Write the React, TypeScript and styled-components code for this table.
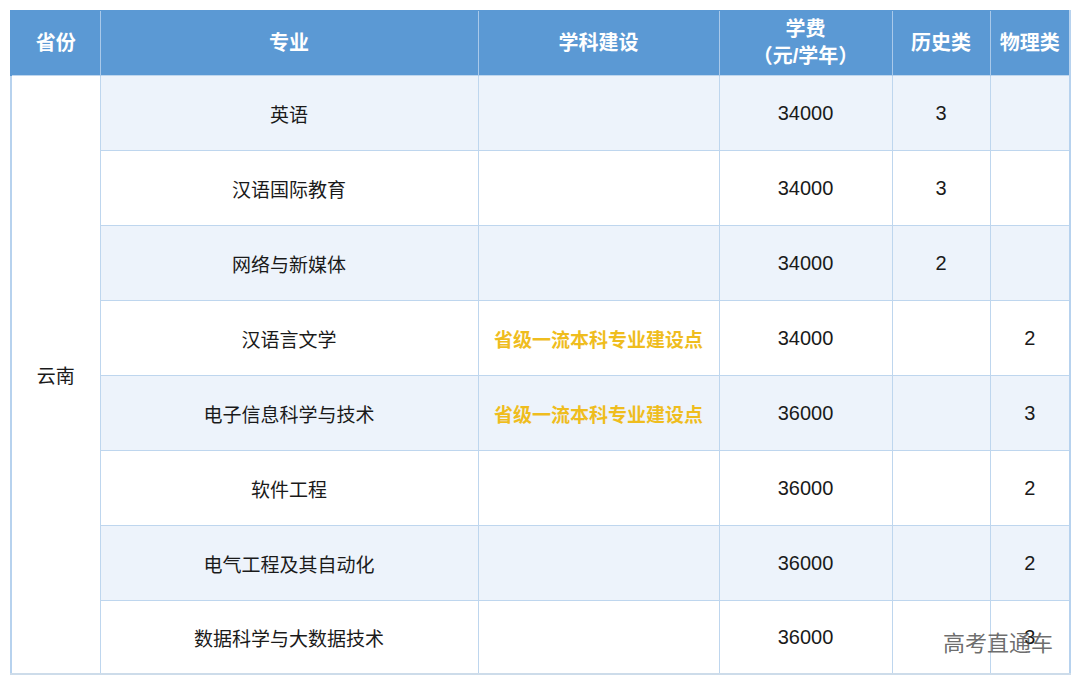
import React from "react";
import styled, { createGlobalStyle } from "styled-components";

const GlobalStyle = createGlobalStyle`
  body {
    margin: 0;
    background: #ffffff;
    font-family: "Liberation Sans", "Noto Sans CJK SC", sans-serif;
  }
`;

const rows = [
  { major: "英语", build: "", fee: "34000", hist: "3", phys: "" },
  { major: "汉语国际教育", build: "", fee: "34000", hist: "3", phys: "" },
  { major: "网络与新媒体", build: "", fee: "34000", hist: "2", phys: "" },
  { major: "汉语言文学", build: "省级一流本科专业建设点", fee: "34000", hist: "", phys: "2" },
  { major: "电子信息科学与技术", build: "省级一流本科专业建设点", fee: "36000", hist: "", phys: "3" },
  { major: "软件工程", build: "", fee: "36000", hist: "", phys: "2" },
  { major: "电气工程及其自动化", build: "", fee: "36000", hist: "", phys: "2" },
  { major: "数据科学与大数据技术", build: "", fee: "36000", hist: "", phys: "3" },
];

function App() {
  return (
    <Page>
      <GlobalStyle />
      <Table>
        <colgroup>
          <col style={{ width: 89 }} />
          <col style={{ width: 378 }} />
          <col style={{ width: 241 }} />
          <col style={{ width: 173 }} />
          <col style={{ width: 98 }} />
          <col style={{ width: 80 }} />
        </colgroup>
        <thead>
          <tr>
            <Th>省份</Th>
            <Th>专业</Th>
            <Th>学科建设</Th>
            <Th>
              学费
              <br />（元/学年）
            </Th>
            <Th>历史类</Th>
            <Th>物理类</Th>
          </tr>
        </thead>
        <tbody>
          {rows.map((r, i) => (
            <tr key={r.major}>
              {i === 0 && <Province rowSpan={rows.length}>云南</Province>}
              <Td $shade={i % 2 === 0} $last={i === rows.length - 1}>{r.major}</Td>
              <Td $shade={i % 2 === 0} $last={i === rows.length - 1}>
                {r.build && <Highlight>{r.build}</Highlight>}
              </Td>
              <Num $shade={i % 2 === 0} $last={i === rows.length - 1}>{r.fee}</Num>
              <Num $shade={i % 2 === 0} $last={i === rows.length - 1}>{r.hist}</Num>
              <Num $shade={i % 2 === 0} $last={i === rows.length - 1}>{r.phys}</Num>
            </tr>
          ))}
        </tbody>
      </Table>
      <Watermark>高考直通车</Watermark>
    </Page>
  );
}

export default App;

const Page = styled.div`
  position: relative;
  width: 1080px;
  height: 685px;
  padding: 10px 0 0 10px;
  box-sizing: border-box;
`;

const Table = styled.table`
  width: 1059px;
  table-layout: fixed;
  border-collapse: collapse;
  color: #1a1a1a;
`;

const Th = styled.th`
  height: 64px;
  padding: 0;
  background: #5b99d4;
  color: #ffffff;
  font-size: 20px;
  font-weight: bold;
  line-height: 27px;
  text-align: center;
  border-left: 1px solid #a9c9ea;
  border-top: 1px solid #5b99d4;
  &:first-child {
    border-left: 2px solid #5b99d4;
  }
  &:last-child {
    border-right: 2px solid #b7d2ee;
  }
`;

const Td = styled.td<{ $shade: boolean; $last: boolean }>`
  height: ${(p) => (p.$last ? 72 : 74)}px;
  padding: 0;
  text-align: center;
  font-size: 19px;
  background: ${(p) => (p.$shade ? "#edf3fb" : "#ffffff")};
  border: 1px solid #bed6ee;
  border-bottom: ${(p) => (p.$last ? "2px solid #cddcea" : "1px solid #bed6ee")};
  &:last-child {
    border-right: 2px solid #b7d2ee;
  }
`;

const Num = styled(Td)`
  font-size: 20px;
`;

const Province = styled.td`
  padding: 0;
  text-align: center;
  font-size: 19px;
  background: #ffffff;
  border: 1px solid #bed6ee;
  border-left: 2px solid #b7d2ee;
  border-bottom: 2px solid #cddcea;
`;

const Highlight = styled.span`
  color: #efbd1e;
  font-weight: bold;
`;

const Watermark = styled.div`
  position: absolute;
  left: 943px;
  top: 625px;
  font-size: 22px;
  color: rgba(70, 70, 70, 0.8);
`;
